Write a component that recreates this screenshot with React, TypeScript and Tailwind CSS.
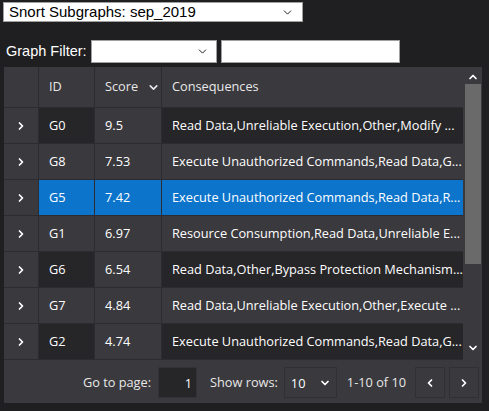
import { ChevronDown, ChevronRight, ChevronLeft, ChevronUp } from "lucide-react";

const rows = [
  { id: "G0", score: "9.5", cons: "Read Data,Unreliable Execution,Other,Modify ..." },
  { id: "G8", score: "7.53", cons: "Execute Unauthorized Commands,Read Data,G..." },
  { id: "G5", score: "7.42", cons: "Execute Unauthorized Commands,Read Data,R..." },
  { id: "G1", score: "6.97", cons: "Resource Consumption,Read Data,Unreliable E..." },
  { id: "G6", score: "6.54", cons: "Read Data,Other,Bypass Protection Mechanism..." },
  { id: "G7", score: "4.84", cons: "Read Data,Unreliable Execution,Other,Execute ..." },
  { id: "G2", score: "4.74", cons: "Execute Unauthorized Commands,Read Data,G..." },
];

const SELECTED = 2;

export default function App() {
  return (
    <div className="w-[489px] h-[411px] bg-[#1f1f21] overflow-hidden relative">
      {/* dataset picker */}
      <div className="pt-[2px] pl-[3px]">
        <div className="w-[300px] h-[20px] bg-white border border-[#a0a0a0] flex items-center justify-between pl-[5px] pr-[8px] font-['Liberation_Sans',Arial,sans-serif] text-[15px] text-black">
          <span>Snort Subgraphs: sep_2019</span>
          <ChevronDown size={13} strokeWidth={1.6} />
        </div>
      </div>

      {/* filter row */}
      <div className="flex items-center mt-[18px] pl-[6px] h-[23px] font-['Liberation_Sans',Arial,sans-serif] text-white">
        <span className="mr-[4px] text-[14.5px]">Graph Filter:</span>
        <div className="w-[126px] h-[23px] bg-white border border-[#a0a0a0] flex items-center justify-end pr-[7px] text-black">
          <ChevronDown size={13} strokeWidth={1.6} />
        </div>
        <div className="w-[179px] h-[23px] bg-white border border-[#a0a0a0] ml-[4px]" />
      </div>

      {/* data grid */}
      <div className="absolute left-[4px] top-[67px] w-[478px] h-[336px] bg-[#3a393d] font-['Open_Sans','Noto_Sans',sans-serif] text-[12.75px] text-white flex flex-col">
        <div className="flex h-[293px]">
          <div className="w-[459px] flex flex-col">
            {/* header */}
            <div className="grid grid-cols-[35px_56px_67px_301px] h-[41px] border-b border-[#2c2b2f]">
              <div className="border-r border-[#2c2b2f]" />
              <div className="border-r border-[#2c2b2f] flex items-center pl-[10px] text-[#e8e8e8]">ID</div>
              <div className="border-r border-[#2c2b2f] flex items-center pl-[10px] text-[#e8e8e8]">
                <span>Score</span>
                <ChevronDown size={13} strokeWidth={3} className="ml-[9px] mt-[1px]" />
              </div>
              <div className="flex items-center pl-[10px] text-[#e8e8e8]">Consequences</div>
            </div>
            {rows.map((r, i) => {
              const sel = i === SELECTED;
              const dark = i % 2 === 0 && !sel;
              const cellBg = sel ? "bg-[#0c74cb]" : dark ? "bg-[#262528]" : "bg-[#3a393d]";
              return (
                <div key={r.id} className="grid grid-cols-[35px_56px_67px_301px] h-[36px] border-b border-[#2c2b2f]">
                  <div className="border-r border-[#2c2b2f] flex items-center justify-center">
                    <ChevronRight size={12} strokeWidth={3.5} />
                  </div>
                  <div className={`${cellBg} border-r border-[#2c2b2f] flex items-center pl-[10px]`}>{r.id}</div>
                  <div className={`${sel ? "bg-[#0c74cb]" : "bg-[#3a393d]"} border-r border-[#2c2b2f] flex items-center pl-[10px]`}>
                    {r.score}
                  </div>
                  <div className={`${cellBg} flex items-center pl-[10px] whitespace-nowrap`}>{r.cons}</div>
                </div>
              );
            })}
          </div>
          {/* scrollbar */}
          <div className="w-[18px] ml-px flex flex-col items-center bg-[#3a393d]">
            <div className="h-[16px] flex items-end justify-center">
              <ChevronUp size={12} strokeWidth={3.5} />
            </div>
            <div className="w-[16px] h-[180px] mt-[1px] bg-[#6a6a6b]" />
            <div className="flex-1" />
            <div className="h-[18px] flex items-start justify-center">
              <ChevronDown size={12} strokeWidth={3.5} />
            </div>
          </div>
        </div>

        {/* footer */}
        <div className="flex-1 flex items-center justify-end pr-[3px] pt-[2px]">
          <span className="text-[#e8e8e8]">Go to page:</span>
          <div className="w-[39px] h-[31px] ml-[7px] bg-[#262528] border border-[#333236] flex items-end justify-end pr-[4px] pb-[4px]">1</div>
          <span className="ml-[13px] text-[#e8e8e8]">Show rows:</span>
          <div className="w-[53px] h-[31px] ml-[6px] border border-[#302f33] flex items-center justify-between pl-[6px] pr-[5px]">
            <span className="mt-[2px]">10</span>
            <ChevronDown size={12} strokeWidth={3.5} />
          </div>
          <span className="ml-[10px] text-[#e8e8e8]">1-10 of 10</span>
          <div className="w-[30px] h-[31px] ml-[9px] border border-[#302f33] flex items-center justify-center">
            <ChevronLeft size={12} strokeWidth={3.5} />
          </div>
          <div className="w-[30px] h-[31px] ml-[4px] border border-[#302f33] flex items-center justify-center">
            <ChevronRight size={12} strokeWidth={3.5} />
          </div>
        </div>
      </div>
    </div>
  );
}
